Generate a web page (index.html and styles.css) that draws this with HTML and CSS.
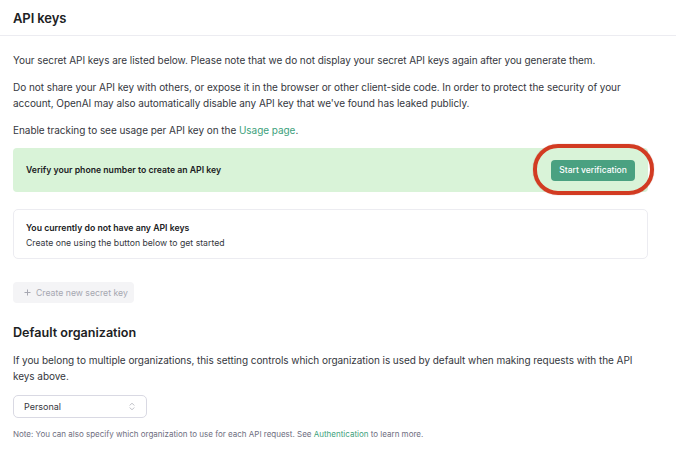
FILE: index.html
```html
<!DOCTYPE html>
<html>
<head>
<meta charset="utf-8">
<link rel="stylesheet" href="styles.css">
</head>
<body>
<header class="top">
  <h1 class="title">API keys</h1>
</header>
<main class="content">
  <p class="text p1">Your secret API keys are listed below. Please note that we do not display your secret API keys again after you generate them.</p>
  <p class="text p2">Do not share your API key with others, or expose it in the browser or other client-side code. In order to protect the security of your account, OpenAI may also automatically disable any API key that we've found has leaked publicly.</p>
  <p class="text p3">Enable tracking to see usage per API key on the <a class="link" href="#">Usage page</a>.</p>

  <div class="banner">
    <span class="banner-text">Verify your phone number to create an API key</span>
    <span class="btn-wrap"><button class="btn-verify">Start verification</button></span>
  </div>

  <div class="card">
    <div class="card-title">You currently do not have any API keys</div>
    <div class="card-sub">Create one using the button below to get started</div>
  </div>

  <button class="btn-create" disabled>
    <svg class="plus" width="7" height="7" viewBox="0 0 7 7"><path d="M3.5 0.5v6M0.5 3.5h6" stroke="#a6a7b1" stroke-width="1" fill="none"/></svg>
    <span class="btn-create-label">Create new secret key</span>
  </button>

  <h2 class="subtitle">Default organization</h2>
  <p class="text p4">If you belong to multiple organizations, this setting controls which organization is used by default when making requests with the API keys above.</p>

  <div class="select">
    <span>Personal</span>
    <svg class="chev" width="6" height="9" viewBox="0 0 6 9"><path d="M1 3.2L3 1.2L5 3.2M1 5.8L3 7.8L5 5.8" stroke="#b4b5bd" stroke-width="0.9" fill="none" stroke-linecap="round" stroke-linejoin="round"/></svg>
  </div>

  <p class="note">Note: You can also specify which organization to use for each API request. See <a class="link" href="#">Authentication</a> to learn more.</p>
</main>
</body>
</html>
```
FILE: styles.css
```css
* { box-sizing: border-box; }
html, body { margin: 0; padding: 0; background: #ffffff; }
body {
  font-family: Inter, "Liberation Sans", sans-serif;
  color: #353740;
  width: 676px;
  height: 468px;
  overflow: hidden;
}
.top {
  height: 36px;
  border-bottom: 1px solid #ececf1;
  padding: 0 13px;
  display: flex;
  align-items: center;
}
.title {
  margin: 0;
  font-size: 13px;
  font-weight: 600;
  color: #202123;
  letter-spacing: -0.1px;
}
.content {
  padding: 0 28px 0 13px;
}
.text {
  font-size: 10px;
  line-height: 16px;
  margin: 0;
  letter-spacing: -0.05px;
}
.p1 { margin-top: 16px; }
.p2 { margin-top: 11px; }
.p3 { margin-top: 11px; }
.link { color: #3d9f7c; text-decoration: none; }

.banner {
  margin-top: 10px;
  height: 44px;
  background: #d9f3d8;
  border-radius: 4px;
  display: flex;
  align-items: center;
  justify-content: space-between;
  padding: 0 13px 0 13px;
}
.banner-text {
  font-size: 8.7px;
  font-weight: 600;
  color: #202123;
}
.btn-wrap {
  position: relative;
  display: inline-flex;
}
.btn-wrap::after {
  content: "";
  position: absolute;
  left: -18px;
  right: -19px;
  top: -16px;
  bottom: -14px;
  border: 4px solid #d23b22;
  border-radius: 25px;
  box-shadow: 0 0 1px rgba(150,30,10,0.6);
  pointer-events: none;
}
.btn-verify {
  font-family: inherit;
  width: 84px;
  height: 21px;
  border: none;
  border-radius: 4px;
  background: #4aa181;
  color: #ffffff;
  font-size: 8.5px;
  font-weight: 500;
  padding: 0;
}

.card {
  margin-top: 17px;
  height: 50px;
  border: 1px solid #ececf1;
  border-radius: 5px;
  padding: 11px 12px 0 12px;
}
.card-title {
  font-size: 8.7px;
  font-weight: 600;
  line-height: 15px;
  color: #202123;
}
.card-sub {
  font-size: 8.7px;
  line-height: 15px;
}

.btn-create {
  margin-top: 23px;
  width: 121px;
  height: 21px;
  border: none;
  border-radius: 4px;
  background: #f4f4f6;
  color: #a6a7b1;
  font-family: inherit;
  font-size: 8.7px;
  display: flex;
  align-items: center;
  gap: 5px;
  padding: 0 0 0 11px;
  white-space: nowrap;
}
.btn-create-label { white-space: nowrap; }

.subtitle {
  margin: 21px 0 0 0;
  font-size: 12.6px;
  font-weight: 600;
  color: #202123;
  line-height: 18px;
}
.p4 { margin-top: 10px; }

.select {
  margin-top: 11px;
  width: 134px;
  height: 23px;
  border: 1px solid #d9d9e3;
  border-radius: 5px;
  display: flex;
  align-items: center;
  justify-content: space-between;
  padding: 0 11px 0 10px;
  font-size: 9px;
  color: #353740;
}
.chev { display: block; }

.note {
  margin: 10px 0 0 0;
  font-size: 8px;
  line-height: 12px;
  color: #6e6e80;
}
```
